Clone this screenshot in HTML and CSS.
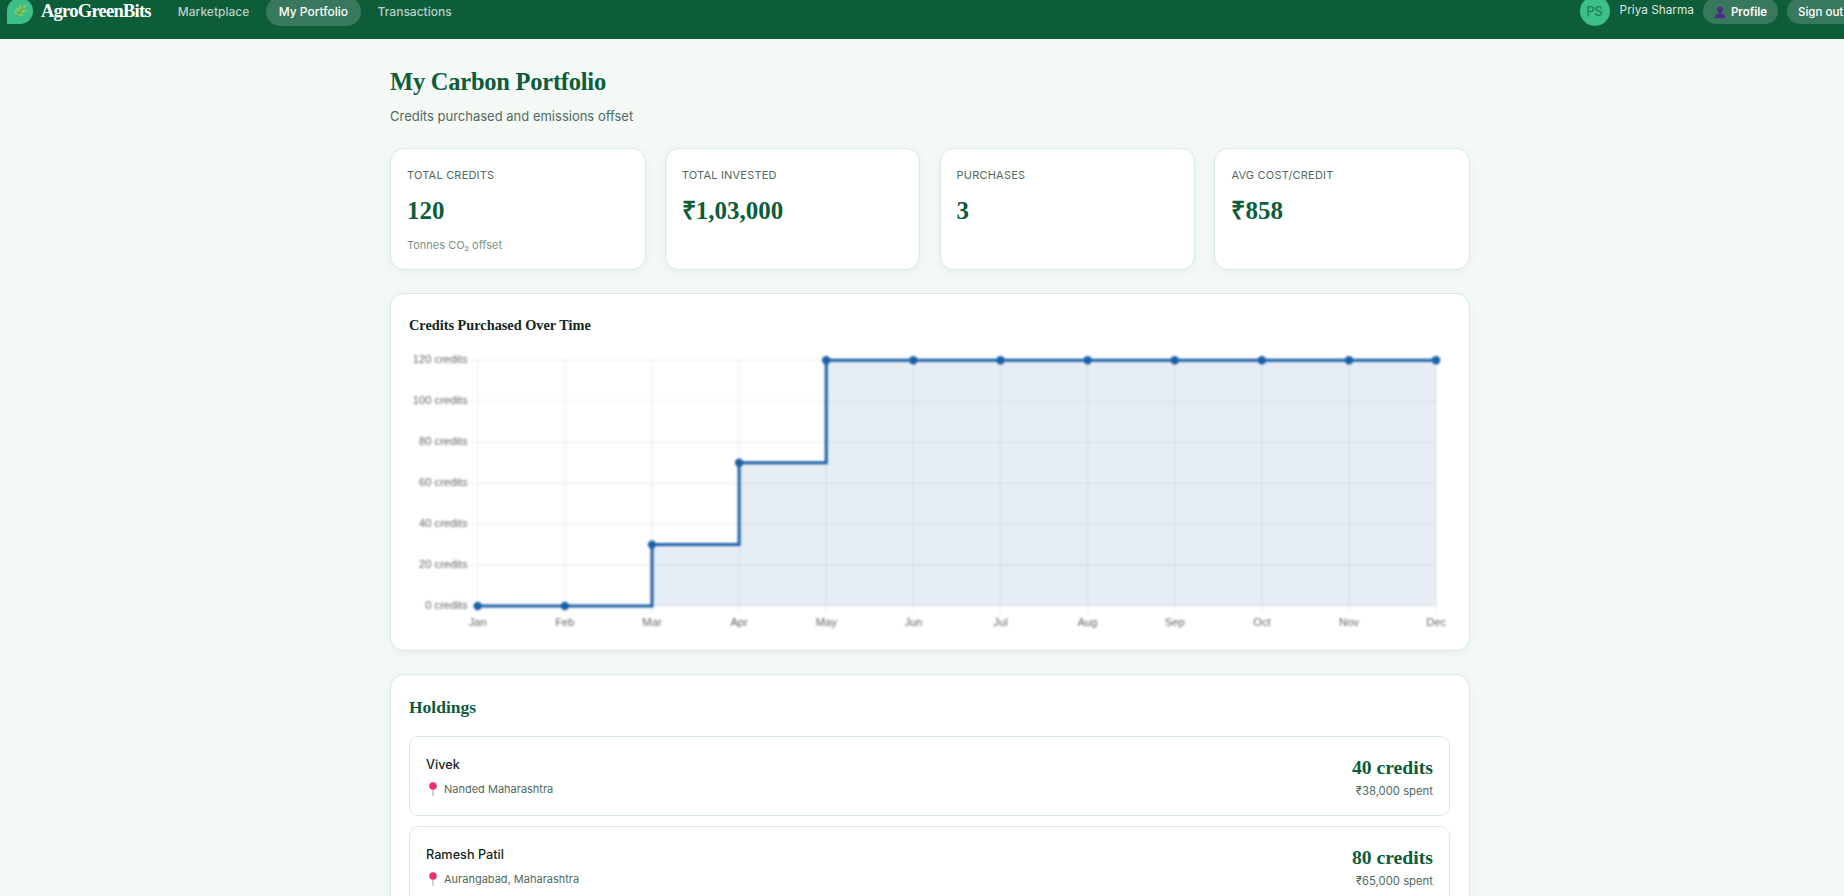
FILE: index.html
```html
<!DOCTYPE html>
<html lang="en">
<head>
<meta charset="utf-8">
<title>My Carbon Portfolio - AgroGreenBits</title>
<link rel="stylesheet" href="styles.css">
</head>
<body>
<nav class="nav">
  <div class="brand">
    <span class="logo">
      <svg viewBox="0 0 20 20" width="16" height="16">
        <path d="M4 18 L15 5" stroke="#7f9a3c" stroke-width="1.2" fill="none"/>
        <path d="M14 4 Q17 2 18 3 Q17 7 14 7Z M9 7 Q9 3 11 2 Q13 5 11 9Z M13 9 Q17 8 18 10 Q15 13 11 11Z M6 10 Q5 6 7 5 Q9 8 8 12Z M9 14 Q13 13 15 15 Q11 17 7 15Z M4 14 Q2 10 4 9 Q6 12 6 15Z" fill="#a4c639"/>
      </svg>
    </span>
    <span class="brand-name">AgroGreenBits</span>
  </div>
  <div class="links">
    <a class="link">Marketplace</a>
    <a class="link active">My Portfolio</a>
    <a class="link">Transactions</a>
  </div>
  <div class="user">
    <span class="avatar">PS</span>
    <span class="user-name">Priya Sharma</span>
    <a class="pill">
      <svg class="bust" viewBox="0 0 12 14" width="12" height="13"><path d="M6 0.5a3 3.2 0 0 1 3 3.3c0 1.6-.8 2.8-1.7 3.4v.9c2 .5 4 1.4 4.2 3.2v1.9H.5v-1.9c.2-1.8 2.2-2.7 4.2-3.2v-.9C3.800 6.600 3 5.400 3 3.800A3 3.200 0 0 1 6 .5z" fill="#4f2a8c"/></svg>
      Profile
    </a>
    <a class="pill signout">Sign out</a>
  </div>
</nav>

<main class="page">
  <h1 class="title">My Carbon Portfolio</h1>
  <p class="subtitle">Credits purchased and emissions offset</p>

  <section class="stats">
    <div class="card stat">
      <div class="stat-label">TOTAL CREDITS</div>
      <div class="stat-value">120</div>
      <div class="stat-sub">Tonnes CO₂ offset</div>
    </div>
    <div class="card stat">
      <div class="stat-label">TOTAL INVESTED</div>
      <div class="stat-value">₹1,03,000</div>
    </div>
    <div class="card stat">
      <div class="stat-label">PURCHASES</div>
      <div class="stat-value">3</div>
    </div>
    <div class="card stat">
      <div class="stat-label">AVG COST/CREDIT</div>
      <div class="stat-value">₹858</div>
    </div>
  </section>

  <section class="card chart-card">
    <h3 class="chart-title">Credits Purchased Over Time</h3>
    <svg class="chart" viewBox="0 0 1040 296" width="1040" height="296">
      <path class="area" d="M242 260V198.600H329.100V116.700H416.200V14.300H1026.100V260Z"/>
      <g class="grid">
        <line x1="60" x2="1026.100" y1="14.300" y2="14.300"/>
        <line x1="60" x2="1026.100" y1="55.300" y2="55.300"/>
        <line x1="60" x2="1026.100" y1="96.200" y2="96.200"/>
        <line x1="60" x2="1026.100" y1="137.200" y2="137.200"/>
        <line x1="60" x2="1026.100" y1="178.100" y2="178.100"/>
        <line x1="60" x2="1026.100" y1="219.100" y2="219.100"/>
        <line x1="60" x2="1026.100" y1="260" y2="260"/>
        <line x1="67.700" x2="67.700" y1="14.300" y2="268"/>
        <line x1="154.800" x2="154.800" y1="14.300" y2="268"/>
        <line x1="242" x2="242" y1="14.300" y2="268"/>
        <line x1="329.100" x2="329.100" y1="14.300" y2="268"/>
        <line x1="416.200" x2="416.200" y1="14.300" y2="268"/>
        <line x1="503.400" x2="503.400" y1="14.300" y2="268"/>
        <line x1="590.500" x2="590.500" y1="14.300" y2="268"/>
        <line x1="677.600" x2="677.600" y1="14.300" y2="268"/>
        <line x1="764.700" x2="764.700" y1="14.300" y2="268"/>
        <line x1="851.900" x2="851.900" y1="14.300" y2="268"/>
        <line x1="939" x2="939" y1="14.300" y2="268"/>
        <line x1="1026.100" x2="1026.100" y1="14.300" y2="268"/>
      </g>
      <path class="line" d="M67.700 260H242V198.600H329.100V116.700H416.200V14.300H1026.100"/>
      <g class="points">
        <circle cx="67.700" cy="260" r="4.200"/><circle cx="154.800" cy="260" r="4.200"/><circle cx="242" cy="198.600" r="4.200"/><circle cx="329.100" cy="116.700" r="4.200"/><circle cx="416.200" cy="14.300" r="4.200"/><circle cx="503.400" cy="14.300" r="4.200"/><circle cx="590.500" cy="14.300" r="4.200"/><circle cx="677.600" cy="14.300" r="4.200"/><circle cx="764.700" cy="14.300" r="4.200"/><circle cx="851.900" cy="14.300" r="4.200"/><circle cx="939" cy="14.300" r="4.200"/><circle cx="1026.100" cy="14.300" r="4.200"/>
      </g>
      <g class="ylabels">
        <text x="57.500" y="16.500">120 credits</text>
        <text x="57.500" y="57.500">100 credits</text>
        <text x="57.500" y="98.500">80 credits</text>
        <text x="57.500" y="139.500">60 credits</text>
        <text x="57.500" y="180.500">40 credits</text>
        <text x="57.500" y="221.500">20 credits</text>
        <text x="57.500" y="262.500">0 credits</text>
      </g>
      <g class="xlabels">
        <text x="67.700" y="280">Jan</text><text x="154.800" y="280">Feb</text><text x="242" y="280">Mar</text><text x="329.100" y="280">Apr</text><text x="416.200" y="280">May</text><text x="503.400" y="280">Jun</text><text x="590.500" y="280">Jul</text><text x="677.600" y="280">Aug</text><text x="764.700" y="280">Sep</text><text x="851.900" y="280">Oct</text><text x="939" y="280">Nov</text><text x="1026.100" y="280">Dec</text>
      </g>
    </svg>
  </section>

  <section class="card holdings">
    <h3 class="holdings-title">Holdings</h3>
    <div class="holding">
      <div>
        <div class="farmer">Vivek</div>
        <div class="place">
          <svg class="pin" viewBox="0 0 10 14" width="10" height="14"><rect x="4.400" y="6" width="1.200" height="8" fill="#b9b4ba"/><circle cx="5" cy="4" r="3.800" fill="#ec2f6e"/></svg>
          Nanded Maharashtra
        </div>
      </div>
      <div class="amount">
        <div class="credits">40 credits</div>
        <div class="spent">₹38,000 spent</div>
      </div>
    </div>
    <div class="holding">
      <div>
        <div class="farmer">Ramesh Patil</div>
        <div class="place">
          <svg class="pin" viewBox="0 0 10 14" width="10" height="14"><rect x="4.400" y="6" width="1.200" height="8" fill="#b9b4ba"/><circle cx="5" cy="4" r="3.800" fill="#ec2f6e"/></svg>
          Aurangabad, Maharashtra
        </div>
      </div>
      <div class="amount">
        <div class="credits">80 credits</div>
        <div class="spent">₹65,000 spent</div>
      </div>
    </div>
  </section>
</main>
</body>
</html>
```
FILE: styles.css
```css
* { box-sizing: border-box; }
html { margin: 0; padding: 0; overflow: hidden; height: 896px; }
body {
  margin: 0;
  width: 1860px;
  height: 896px;
  overflow: hidden;
  background: #f4f9f6;
  font-family: "Inter", "Noto Sans", sans-serif;
  color: #12261d;
}
.nav {
  display: flex;
  align-items: center;
  height: 56px;
  margin-top: -17px;
  padding-left: 7px;
  background: #0d5c3a;
}
.brand { display: flex; align-items: center; gap: 8px; }
.logo {
  width: 26px;
  height: 26px;
  display: flex;
  align-items: center;
  justify-content: center;
  background: #3dbf8a;
  border-radius: 50% 50% 50% 0;
}
.brand-name {
  font-family: "Liberation Serif", serif;
  font-weight: 700;
  font-size: 18.5px;
  letter-spacing: -.75px;
  color: #fff;
}
.links { display: flex; align-items: center; gap: 3.5px; margin-left: 14px; }
.link {
  padding: 7px 13px;
  border-radius: 16px;
  font-size: 12px;
  font-weight: 500;
  color: rgba(255,255,255,.72);
}
.link.active { background: rgba(255,255,255,.18); color: #fff; }
.user { display: flex; align-items: center; margin-left: auto; }
.avatar {
  width: 30px;
  height: 30px;
  border-radius: 50%;
  background: #3dbf8a;
  color: #1e7f56;
  font-size: 12.5px;
  font-weight: 500;
  display: flex;
  align-items: center;
  justify-content: center;
}
.user-name { margin: 0 0 3px 10px; font-size: 11.8px; font-weight: 400; color: rgba(255,255,255,.88); }
.pill {
  display: flex;
  align-items: center;
  gap: 5px;
  height: 26px;
  margin-left: 9px;
  padding: 2px 11px 0;
  border-radius: 13px;
  background: rgba(255,255,255,.18);
  color: #fff;
  font-size: 11.5px;
  font-weight: 600;
}
.signout { font-weight: 500; width: 73px; }
.page { width: 1080px; margin: 0 auto; padding-top: 28px; }
.title {
  margin: 0;
  font-family: "Liberation Serif", serif;
  font-weight: 700;
  font-size: 24.5px;
  letter-spacing: -.24px;
  line-height: 30px;
  color: #0d5c3a;
}
.subtitle { margin: 10px 0 0; font-size: 13px; line-height: 18px; color: #4f6a5e; }
.stats { display: grid; grid-template-columns: repeat(4, 1fr); gap: 19.2px; margin-top: 23px; }
.card {
  background: #fff;
  border: 1px solid #d8ebe2;
  border-radius: 14px;
  box-shadow: 0 2px 10px rgba(13,92,58,.06);
}
.stat { height: 122px; padding: 18px 16px; }
.stat-label { font-size: 11px; line-height: 16px; letter-spacing: .2px; color: #4f6a5e; }
.stat-value {
  margin-top: 12px;
  font-family: "Liberation Serif", serif;
  font-weight: 700;
  font-size: 25px;
  line-height: 32px;
  color: #0d5c3a;
}
.stat-sub { margin-top: 10px; font-size: 11px; line-height: 16px; color: #7b9288; }
.chart-card { margin-top: 23px; height: 358px; padding: 19px 19px 19px 18px; }
.chart-title {
  margin: 0;
  font-family: "Liberation Serif", serif;
  font-weight: 700;
  font-size: 14.3px;
  line-height: 24px;
  color: #12261d;
}
.chart { display: block; margin: 8.5px 0 0 1px; filter: blur(.9px); }
.area { fill: rgba(26,95,165,.11); }
.grid line { stroke: rgba(0,0,0,.08); stroke-width: 1; }
.line { fill: none; stroke: #1a5fa8; stroke-width: 3; }
.points circle { fill: #1a5fa8; }
.ylabels text, .xlabels text {
  font-family: "Liberation Sans", sans-serif;
  font-size: 11.2px;
  fill: #666;
}
.ylabels text { text-anchor: end; }
.xlabels text { text-anchor: middle; }
.holdings { margin-top: 23px; padding: 19px 19px 19px 18px; height: 240px; }
.holdings-title {
  margin: 0;
  font-family: "Liberation Serif", serif;
  font-weight: 700;
  font-size: 17.5px;
  line-height: 26px;
  color: #0d5c3a;
}
.holding {
  display: flex;
  justify-content: space-between;
  align-items: center;
  height: 80px;
  margin-top: 10px;
  padding: 0 16px;
  border: 1px solid #d8ebe2;
  border-radius: 10px;
}
.holdings-title + .holding { margin-top: 16px; }
.farmer { font-size: 12.7px; line-height: 18px; font-weight: 500; color: #12261d; }
.place { display: flex; align-items: center; gap: 6px; margin-top: 7px; font-size: 11px; line-height: 16px; color: #4f6a5e; }
.pin { margin-left: 2px; }
.amount { text-align: right; }
.credits {
  font-family: "Liberation Serif", serif;
  font-weight: 700;
  font-size: 19.7px;
  line-height: 26px;
  color: #0d5c3a;
}
.spent { margin-top: 3px; font-size: 11.3px; line-height: 16px; color: #4f6a5e; }
```
